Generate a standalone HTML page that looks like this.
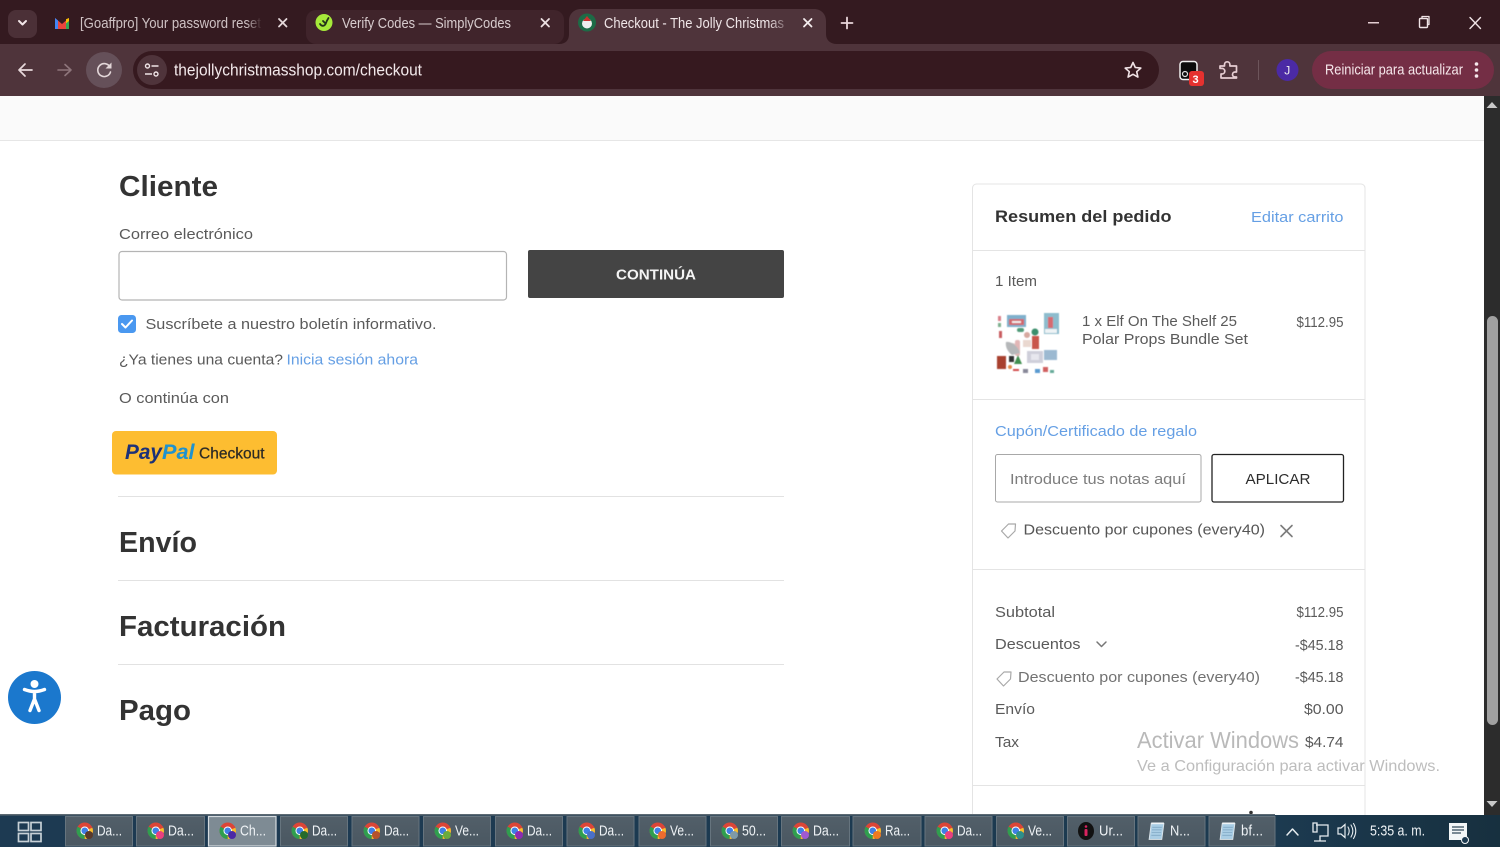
<!DOCTYPE html>
<html lang="es"><head><meta charset="utf-8"><title>Checkout</title>
<style>
html,body{margin:0;padding:0;width:1500px;height:847px;overflow:hidden;background:#fff}
svg{display:block;position:absolute;left:0;top:0}
text{font-family:"Liberation Sans","DejaVu Sans",sans-serif;white-space:pre}
.t{fill:#5a5a5a;font-size:15px}
.b{fill:#4b8fe0;font-size:15px;opacity:.85}
.h{fill:#333;font-size:29px;font-weight:bold}
.c{fill:#f0e6e8;font-size:15px}
.k{fill:#eef2f5;font-size:15px}
.ln{fill:none;stroke-linecap:round;stroke-linejoin:round}
</style></head><body>
<svg width="1500" height="847" viewBox="0 0 1500 847" xmlns="http://www.w3.org/2000/svg">
<defs>
<linearGradient id="tb" x1="0" y1="0" x2="1" y2="0"><stop offset="0" stop-color="#1d3a52"/><stop offset=".85" stop-color="#1c3a50"/><stop offset="1" stop-color="#17303f"/></linearGradient>
<linearGradient id="btn" x1="0" y1="0" x2="0" y2="1"><stop offset="0" stop-color="#525f69"/><stop offset="1" stop-color="#4a5761"/></linearGradient>
<linearGradient id="fade1" x1="0" y1="0" x2="1" y2="0"><stop offset="0" stop-color="#341a20" stop-opacity="0"/><stop offset="1" stop-color="#341a20"/></linearGradient>
<linearGradient id="fade3" x1="0" y1="0" x2="1" y2="0"><stop offset="0" stop-color="#4f343b" stop-opacity="0"/><stop offset="1" stop-color="#4f343b"/></linearGradient>
<filter id="soft"><feGaussianBlur stdDeviation=".55"/></filter>
<symbol id="ch" viewBox="0 0 16 16" overflow="visible">
<circle cx="8" cy="8" r="7.5" fill="#dc4537"/>
<path d="M8 8L1.5 4.2A7.5 7.5 0 0 0 8 15.5Z" fill="#2f9e4f"/>
<path d="M8 8L15 5.3A7.5 7.5 0 0 1 8 15.500Z" fill="#f6c02d"/>
<circle cx="8" cy="8" r="3.9" fill="#fff"/><circle cx="8" cy="8" r="3" fill="#3f7fe6"/>
</symbol>
<symbol id="np" viewBox="0 0 14 17" overflow="visible">
<path d="M2 1h12l-2 15H0z" fill="#a9cde4" stroke="#dfe7ec" stroke-width=".8"/>
<path d="M3 4.500h9M2.700 7h9M2.400 9.500h9M2.100 12h9" stroke="#7aa3bf" stroke-width=".7"/>
<rect x="2" y="0" width="12" height="1.600" fill="#eef3f6"/>
</symbol>
</defs>

<!-- browser frame -->
<rect width="1500" height="44" fill="#341a20"/>
<rect y="44" width="1500" height="52" fill="#4f343b"/>
<rect x="8" y="10" width="29" height="28" rx="8" fill="#4b3037"/>
<path class="ln" d="M19 21l3.500 3.500L26 21" stroke="#f2e6e8" stroke-width="2"/>

<!-- tab 1 -->
<path d="M55 18l7 6 7-6v11h-14z" fill="#e8453c"/>
<path d="M55 18v11h3v-8.500z" fill="#4285f4"/><path d="M69 18v11h-3v-8.500z" fill="#34a853"/><path d="M66 19.200l3-1.200v3l-3 2.400z" fill="#fbbc04"/>
<text x="80" y="28" class="c" textLength="181" lengthAdjust="spacingAndGlyphs" fill-opacity=".82">[Goaffpro] Your password reset</text>
<rect x="246" y="12" width="16" height="24" fill="url(#fade1)"/>
<path class="ln" d="M279 19l7.500 7.500M286.500 19l-7.500 7.500" stroke="#e5d8da" stroke-width="1.800"/>

<!-- tab 2 -->
<rect x="306" y="10" width="258" height="34" rx="10" fill="#40242b"/>
<circle cx="324" cy="22.500" r="8.500" fill="#a6ea3a"/>
<path class="ln" d="M320 24c2 3 5 2 6-1s2-4 2.500-5M323 21l2 2" stroke="#24331a" stroke-width="1.800"/>
<text x="342" y="28" class="c" textLength="169" lengthAdjust="spacingAndGlyphs" fill-opacity=".86">Verify Codes — SimplyCodes</text>
<path class="ln" d="M541.500 19l7.500 7.500M549 19l-7.500 7.500" stroke="#ece0e2" stroke-width="1.800"/>

<!-- active tab -->
<path d="M559 44C566 44 569 40 569 34V21C569 14 574 9 581 9H814C821 9 826 14 826 21V34C826 40 830 44 837 44Z" fill="#4f343b"/>
<circle cx="587" cy="22.500" r="9" fill="#1d6b46"/>
<circle cx="587" cy="23.500" r="5" fill="#eee"/><path d="M583 21l4-5 4 5z" fill="#c9312f"/>
<text x="604" y="28" class="c" textLength="180" lengthAdjust="spacingAndGlyphs" fill="#f4ecee">Checkout - The Jolly Christmas</text>
<rect x="768" y="12" width="24" height="24" fill="url(#fade3)"/>
<path class="ln" d="M804 19l7.500 7.500M811.500 19l-7.500 7.500" stroke="#f4ecee" stroke-width="1.800"/>
<path class="ln" d="M847 17.500v11M841.500 23h11" stroke="#e9d6da" stroke-width="1.800"/>

<!-- window controls -->
<rect x="1368" y="22" width="11" height="1.500" fill="#e4cdd2"/>
<rect x="1419.500" y="18.500" width="8" height="9" rx="1" fill="none" stroke="#f0e4e6" stroke-width="1.400"/>
<path class="ln" d="M1422 18v-1.500h7v8h-1.500" stroke="#f0e4e6" stroke-width="1.300"/>
<path class="ln" d="M1470 17.500l10.500 11M1480.500 17.500l-10.500 11" stroke="#f0e4e6" stroke-width="1.400"/>

<!-- toolbar -->
<path class="ln" d="M32 70H19M25 64l-6 6 6 6" stroke="#e8d8db" stroke-width="1.700"/>
<path class="ln" d="M71 70H58M65 64.500l6 5.500-6 5.500" stroke="#8e757b" stroke-width="1.600"/>
<circle cx="104" cy="70" r="18" fill="#655059"/>
<path class="ln" d="M110 67A6.500 6.500 0 1 0 110.500 72" stroke="#e2d6d8" stroke-width="1.600"/>
<path d="M111.500 62.500v6H105.500z" fill="#e2d6d8"/>
<rect x="133" y="51" width="1026" height="38" rx="19" fill="#36191f"/>
<circle cx="152" cy="70" r="15" fill="#4f343b"/>
<circle cx="147.500" cy="66" r="2" fill="none" stroke="#efe4e6" stroke-width="1.400"/>
<path d="M151.500 66h7M145 74h7" stroke="#efe4e6" stroke-width="1.500"/>
<circle cx="156" cy="74" r="2" fill="none" stroke="#efe4e6" stroke-width="1.400"/>
<text x="174" y="75.500" font-size="16.500" fill="#f3e9eb" textLength="248" lengthAdjust="spacingAndGlyphs">thejollychristmasshop.com/checkout</text>
<path class="ln" d="M1133 62.500l2.300 5 5.500.6-4.100 3.600 1.200 5.400-4.900-2.800-4.900 2.800 1.200-5.400-4.100-3.600 5.500-.6z" stroke="#f0e2e5" stroke-width="1.600"/>
<rect x="1180" y="61.500" width="17" height="18" rx="3" fill="#0c0c0c" stroke="#f0f0f0" stroke-width="1.500"/>
<circle cx="1185" cy="74" r="2.500" fill="none" stroke="#ddd" stroke-width="1.200"/>
<rect x="1189" y="71" width="15" height="15" rx="3" fill="#e5312f"/>
<text x="1192.500" y="83" font-size="11" font-weight="bold" fill="#fff">3</text>
<path class="ln" d="M1220 66h4.500v-1.500a2.700 2.700 0 0 1 5.400 0V66h6.600v6h-1.500a2.500 2.500 0 0 0 0 5h1.500V78H1221v-4h1a2.800 2.800 0 0 0 0-5.600h-2z" stroke="#e6cdd2" stroke-width="1.700"/>
<rect x="1258" y="60" width="1" height="20" fill="#6d555b"/>
<circle cx="1287.500" cy="70" r="11" fill="#4b2aa5"/>
<text x="1284.300" y="74.500" font-size="12" fill="#eee">J</text>
<rect x="1312" y="51" width="182" height="38" rx="19" fill="#742e45"/>
<text x="1325" y="74.500" font-size="14.500" fill="#f6e7eb" textLength="138" lengthAdjust="spacingAndGlyphs">Reiniciar para actualizar</text>
<circle cx="1476.500" cy="64" r="1.800" fill="#f6e7eb"/><circle cx="1476.500" cy="70" r="1.800" fill="#f6e7eb"/><circle cx="1476.500" cy="76" r="1.800" fill="#f6e7eb"/>

<!-- page -->
<rect y="96" width="1484" height="719" fill="#fff"/>
<rect y="96" width="1484" height="44" fill="#fafafa"/>
<rect y="140" width="1484" height="1" fill="#e6e6e6"/>

<text x="119" y="196" class="h" textLength="99" lengthAdjust="spacingAndGlyphs">Cliente</text>
<text x="119" y="239" class="t" textLength="134" lengthAdjust="spacingAndGlyphs">Correo electrónico</text>
<rect x="119" y="251.500" width="387.500" height="48.500" rx="3" fill="#fff" stroke="#b4b4b4" stroke-width="1.200"/>
<rect x="528" y="250" width="256" height="48" rx="2" fill="#444444"/>
<text x="616" y="279.500" font-size="14.500" font-weight="bold" fill="#f4f4f4" textLength="80" lengthAdjust="spacingAndGlyphs">CONTINÚA</text>
<rect x="118" y="315" width="18" height="18" rx="3.500" fill="#4a98f0"/>
<path class="ln" d="M122 324l3.500 3.500 6.500-7" stroke="#fff" stroke-width="2"/>
<text x="145.500" y="329" class="t" textLength="291" lengthAdjust="spacingAndGlyphs">Suscríbete a nuestro boletín informativo.</text>
<text x="119" y="364.500" class="t" textLength="164" lengthAdjust="spacingAndGlyphs">¿Ya tienes una cuenta?</text>
<text x="286.500" y="364.500" class="b" textLength="131.500" lengthAdjust="spacingAndGlyphs">Inicia sesión ahora</text>
<text x="119" y="403" class="t" textLength="110" lengthAdjust="spacingAndGlyphs">O continúa con</text>
<rect x="112" y="431" width="165" height="43.500" rx="4" fill="#fdbd31"/>
<text x="125" y="459" font-size="21.500" font-weight="bold" font-style="italic" fill="#1c3178" textLength="37" lengthAdjust="spacingAndGlyphs">Pay</text>
<text x="162" y="459" font-size="21.500" font-weight="bold" font-style="italic" fill="#1f92cf" textLength="32.500" lengthAdjust="spacingAndGlyphs">Pal</text>
<text x="199" y="458.500" font-size="15.500" fill="#2d2b25" stroke="#2d2b25" stroke-width=".25" textLength="65.500" lengthAdjust="spacingAndGlyphs">Checkout</text>
<rect x="118" y="496" width="666" height="1" fill="#e2e2e2"/>
<text x="119" y="552" class="h" textLength="78" lengthAdjust="spacingAndGlyphs">Envío</text>
<rect x="118" y="580" width="666" height="1" fill="#e2e2e2"/>
<text x="119" y="636" class="h" textLength="167" lengthAdjust="spacingAndGlyphs">Facturación</text>
<rect x="118" y="664" width="666" height="1" fill="#e2e2e2"/>
<text x="119" y="720" class="h" textLength="72" lengthAdjust="spacingAndGlyphs">Pago</text>

<!-- accessibility -->
<circle cx="34.500" cy="697.500" r="26.500" fill="#1b78cd"/>
<circle cx="34.500" cy="684" r="4" fill="#fff"/>
<path class="ln" d="M24.500 689.500c4 1.500 7 2 10 2s6-.5 10-2M34.500 692v7M34.500 699l-4.500 11.500M34.500 699l4.500 11.500" stroke="#fff" stroke-width="3.400"/>

<!-- order card -->
<path d="M972.500 815V188a4 4 0 0 1 4-4H1361a4 4 0 0 1 4 4V815" fill="#fff" stroke="#e4e4e4" stroke-width="1"/>
<text x="995" y="222" font-size="17" font-weight="bold" fill="#333" textLength="176.500" lengthAdjust="spacingAndGlyphs">Resumen del pedido</text>
<text x="1251" y="222" class="b" textLength="92.500" lengthAdjust="spacingAndGlyphs">Editar carrito</text>
<rect x="973" y="250" width="392" height="1" fill="#e4e4e4"/>
<text x="995" y="286" class="t" textLength="42" lengthAdjust="spacingAndGlyphs">1 Item</text>

<!-- product image -->
<g filter="url(#soft)">
<rect x="1007" y="315" width="19" height="12" fill="#7fb0cc"/><rect x="1009" y="319" width="15" height="6" fill="#d2686d"/><rect x="1012" y="321" width="9" height="2" fill="#f2eeee"/>
<rect x="1044" y="313" width="15" height="21" fill="#8dbccd"/><rect x="1048" y="317" width="5" height="11" fill="#d66a6f"/><rect x="1045" y="329" width="12" height="4" fill="#eef3f5"/>
<rect x="998" y="316" width="3" height="5" fill="#d9808a"/><rect x="998" y="323" width="3" height="4" fill="#7db08f"/><rect x="999" y="331" width="3" height="7" fill="#c95c60"/>
<ellipse cx="1012" cy="346" rx="5" ry="3" fill="#d8c9c9"/><rect x="1015" y="340" width="5" height="16" rx="2" fill="#e2b6b6"/>
<path d="M1006 342c5-1 12 4 14 11l-8 2c-4-3-7-8-6-13z" fill="#b5b7b9"/>
<rect x="1017" y="328" width="7" height="4" rx="2" fill="#4f9a78"/>
<circle cx="1027" cy="335" r="3" fill="#d7a9a0"/><rect x="1023" y="340" width="8" height="7" fill="#ead8d0"/>
<circle cx="1035" cy="332" r="3.500" fill="#3a8f6c"/><rect x="1032" y="336" width="7" height="13" fill="#c9564c"/>
<rect x="1027" y="351" width="16" height="12" fill="#cfcfda"/><rect x="1031" y="354" width="8" height="6" fill="#e7e7ee"/><rect x="1044" y="350" width="13" height="10" fill="#9cb9d1"/>
<rect x="997" y="356" width="9" height="13" fill="#a8402e"/><rect x="1009" y="356" width="5" height="6" fill="#333"/><path d="M1018 355l4 9h-8z" fill="#3f8f4f"/><circle cx="1010" cy="367" r="2" fill="#e08a4a"/>
<rect x="1013" y="369" width="6" height="2" fill="#d24b4b"/><rect x="1023" y="369" width="5" height="4" fill="#889"/><rect x="1035" y="369" width="5" height="4" fill="#5a9ad0"/><rect x="1043" y="367" width="5" height="5" fill="#d06060"/><rect x="1050" y="370" width="4" height="3" fill="#6a9"/>
</g>
<text x="1082" y="326" class="t" textLength="155" lengthAdjust="spacingAndGlyphs">1 x Elf On The Shelf 25</text>
<text x="1082" y="344" class="t" textLength="166" lengthAdjust="spacingAndGlyphs">Polar Props Bundle Set</text>
<text x="1296.500" y="327" class="t" textLength="47" lengthAdjust="spacingAndGlyphs">$112.95</text>
<rect x="973" y="399" width="392" height="1" fill="#e4e4e4"/>
<text x="995" y="436" class="b" textLength="202" lengthAdjust="spacingAndGlyphs">Cupón/Certificado de regalo</text>
<rect x="995.500" y="454.500" width="205.500" height="47.500" rx="2" fill="#fff" stroke="#a8a8a8" stroke-width="1"/>
<text x="1010" y="484" font-size="15" fill="#7d7d7d" textLength="176" lengthAdjust="spacingAndGlyphs">Introduce tus notas aquí</text>
<rect x="1212" y="454.500" width="131.500" height="47.500" rx="2" fill="#fff" stroke="#222" stroke-width="1.300"/>
<text x="1245.500" y="484" font-size="15" fill="#2c2c2c" textLength="65" lengthAdjust="spacingAndGlyphs">APLICAR</text>
<path class="ln" d="M1001.500 531l7-7h7l-.5 7-7 7z" stroke="#a9a9a9" stroke-width="1.200"/>
<text x="1023.500" y="534.500" font-size="15" fill="#555" textLength="241.500" lengthAdjust="spacingAndGlyphs">Descuento por cupones (every40)</text>
<path class="ln" d="M1281 525.500l11 11M1292 525.500l-11 11" stroke="#7c7c7c" stroke-width="1.600"/>
<rect x="973" y="569" width="392" height="1" fill="#e4e4e4"/>
<text x="995" y="617" class="t" textLength="60" lengthAdjust="spacingAndGlyphs">Subtotal</text>
<text x="1296.500" y="617" class="t" textLength="47" lengthAdjust="spacingAndGlyphs">$112.95</text>
<text x="995" y="649" class="t" textLength="85.500" lengthAdjust="spacingAndGlyphs">Descuentos</text>
<path class="ln" d="M1097 642l4.500 4.500 4.500-4.500" stroke="#777" stroke-width="1.500"/>
<text x="1295" y="650" class="t" textLength="48.500" lengthAdjust="spacingAndGlyphs">-$45.18</text>
<path class="ln" d="M997 679l7-7h7l-.5 7-7 7z" stroke="#a9a9a9" stroke-width="1.200"/>
<text x="1018" y="682" font-size="15" fill="#727272" textLength="242" lengthAdjust="spacingAndGlyphs">Descuento por cupones (every40)</text>
<text x="1295" y="682" class="t" textLength="48.500" lengthAdjust="spacingAndGlyphs">-$45.18</text>
<text x="995" y="714" class="t" textLength="40" lengthAdjust="spacingAndGlyphs">Envío</text>
<text x="1304" y="714" class="t" textLength="39.500" lengthAdjust="spacingAndGlyphs">$0.00</text>
<text x="995" y="747" class="t" textLength="24" lengthAdjust="spacingAndGlyphs">Tax</text>
<text x="1305" y="747" class="t" textLength="38.500" lengthAdjust="spacingAndGlyphs">$4.74</text>
<rect x="973" y="785" width="392" height="1" fill="#e4e4e4"/>
<circle cx="1251" cy="812.500" r="1.800" fill="#333"/>

<!-- watermark -->
<text x="1137" y="748" font-size="23" fill="#b9b9b9" textLength="162" lengthAdjust="spacingAndGlyphs">Activar Windows</text>
<text x="1137" y="771" font-size="16" fill="#bdbdbd" textLength="303" lengthAdjust="spacingAndGlyphs">Ve a Configuración para activar Windows.</text>

<!-- scrollbar -->
<rect x="1484" y="96" width="16" height="719" fill="#2c2c2c"/>
<rect x="1487" y="316" width="11" height="409" rx="5.500" fill="#a0a0a0"/>
<path d="M1486.500 108l5.500-6 5.500 6z" fill="#c8c8c8"/>
<path d="M1486.500 801l5.500 6 5.500-6z" fill="#c8c8c8"/>

<!-- taskbar -->
<rect y="815" width="1500" height="32" fill="url(#tb)"/>
<rect y="814" width="1275" height="1.500" fill="#5d6a73"/>
<g fill="none" stroke="#c7d0d6" stroke-width="1.700">
<rect x="18.500" y="822.500" width="10" height="8"/><rect x="31" y="822.500" width="10" height="8"/><rect x="18.500" y="833.500" width="10" height="8"/><rect x="31" y="833.500" width="10" height="8"/>
</g>
<g fill="url(#btn)" stroke="#66747e" stroke-width="1">
<rect x="65.500" y="816.500" width="67" height="29.500"/><rect x="136.500" y="816.500" width="68" height="29.500"/>
<rect x="280.500" y="816.500" width="67" height="29.500"/><rect x="352" y="816.500" width="67" height="29.500"/><rect x="423.500" y="816.500" width="67" height="29.500"/><rect x="495.500" y="816.500" width="67" height="29.500"/><rect x="567" y="816.500" width="67" height="29.500"/><rect x="639" y="816.500" width="67" height="29.500"/><rect x="710.500" y="816.500" width="67" height="29.500"/><rect x="781.500" y="816.500" width="68" height="29.500"/><rect x="853" y="816.500" width="68" height="29.500"/><rect x="925" y="816.500" width="67" height="29.500"/><rect x="996.500" y="816.500" width="67" height="29.500"/><rect x="1067.500" y="816.500" width="67" height="29.500"/><rect x="1138" y="816.500" width="67" height="29.500"/><rect x="1209" y="816.500" width="66" height="29.500"/>
</g>
<rect x="208.500" y="816.500" width="67.500" height="29.500" fill="#7e8b94" stroke="#d5dbdf" stroke-width="1.200"/>

<use href="#ch" x="76" y="822" width="17.500" height="17.500"/><circle cx="89" cy="835" r="4" fill="#5a3a2a"/>
<use href="#ch" x="147" y="822" width="17.500" height="17.500"/><circle cx="160" cy="835" r="4" fill="#e9407f"/>
<use href="#ch" x="219" y="822" width="17.500" height="17.500"/><circle cx="232" cy="835" r="4" fill="#4b2aa5"/>
<use href="#ch" x="291" y="822" width="17.500" height="17.500"/><circle cx="304" cy="835" r="4" fill="#256b2c"/>
<use href="#ch" x="363" y="822" width="17.500" height="17.500"/><circle cx="376" cy="835" r="4" fill="#b5522a"/>
<use href="#ch" x="434" y="822" width="17.500" height="17.500"/><circle cx="447" cy="835" r="4" fill="#6bab3d"/>
<use href="#ch" x="506" y="822" width="17.500" height="17.500"/><circle cx="519" cy="835" r="4" fill="#8e2bb0"/>
<use href="#ch" x="578" y="822" width="17.500" height="17.500"/><circle cx="591" cy="835" r="4" fill="#4a70c8"/>
<use href="#ch" x="649" y="822" width="17.500" height="17.500"/><circle cx="662" cy="835" r="4" fill="#ee6c2f"/>
<use href="#ch" x="721" y="822" width="17.500" height="17.500"/><circle cx="734" cy="835" r="4" fill="#7f9aa8"/>
<use href="#ch" x="792" y="822" width="17.500" height="17.500"/><circle cx="805" cy="835" r="4" fill="#a05ad0"/>
<use href="#ch" x="864" y="822" width="17.500" height="17.500"/><circle cx="877" cy="835" r="4" fill="#ee7a22"/>
<use href="#ch" x="936" y="822" width="17.500" height="17.500"/><circle cx="949" cy="835" r="4" fill="#e9407f"/>
<use href="#ch" x="1007" y="822" width="17.500" height="17.500"/><circle cx="1020" cy="835" r="4" fill="#2e8f8a"/>
<ellipse cx="1086" cy="831" rx="8" ry="9" fill="#111"/><rect x="1084.500" y="829" width="3" height="7" rx="1" fill="#d8235f"/><circle cx="1086" cy="826.500" r="1.300" fill="#d8235f"/>
<use href="#np" x="1149" y="822.500" width="15" height="18"/>
<use href="#np" x="1220" y="822.500" width="15" height="18"/>

<text x="97" y="835.500" class="k" textLength="25" lengthAdjust="spacingAndGlyphs">Da...</text>
<text x="168" y="835.500" class="k" textLength="26" lengthAdjust="spacingAndGlyphs">Da...</text>
<text x="240" y="835.500" class="k" textLength="26" lengthAdjust="spacingAndGlyphs">Ch...</text>
<text x="312" y="835.500" class="k" textLength="25" lengthAdjust="spacingAndGlyphs">Da...</text>
<text x="384" y="835.500" class="k" textLength="25" lengthAdjust="spacingAndGlyphs">Da...</text>
<text x="455" y="835.500" class="k" textLength="24" lengthAdjust="spacingAndGlyphs">Ve...</text>
<text x="527" y="835.500" class="k" textLength="25" lengthAdjust="spacingAndGlyphs">Da...</text>
<text x="599" y="835.500" class="k" textLength="25" lengthAdjust="spacingAndGlyphs">Da...</text>
<text x="670" y="835.500" class="k" textLength="24" lengthAdjust="spacingAndGlyphs">Ve...</text>
<text x="742" y="835.500" class="k" textLength="24" lengthAdjust="spacingAndGlyphs">50...</text>
<text x="813" y="835.500" class="k" textLength="26" lengthAdjust="spacingAndGlyphs">Da...</text>
<text x="885" y="835.500" class="k" textLength="25" lengthAdjust="spacingAndGlyphs">Ra...</text>
<text x="957" y="835.500" class="k" textLength="25" lengthAdjust="spacingAndGlyphs">Da...</text>
<text x="1028" y="835.500" class="k" textLength="24" lengthAdjust="spacingAndGlyphs">Ve...</text>
<text x="1099" y="835.500" class="k" textLength="24" lengthAdjust="spacingAndGlyphs">Ur...</text>
<text x="1170" y="835.500" class="k" textLength="20" lengthAdjust="spacingAndGlyphs">N...</text>
<text x="1241" y="835.500" class="k" textLength="22" lengthAdjust="spacingAndGlyphs">bf...</text>

<!-- tray -->
<path class="ln" d="M1287 835l5.500-6 5.500 6" stroke="#e6ecef" stroke-width="1.500"/>
<path d="M1316 825h12v11h-8v5M1314 841h12M1313 823h4v9h-4z" fill="none" stroke="#e6ecef" stroke-width="1.300"/>
<path d="M1338 828h3l4-3.500v13l-4-3.500h-3z" fill="none" stroke="#e6ecef" stroke-width="1.200"/>
<path class="ln" d="M1348 827c1.500 2.500 1.500 5.500 0 8M1351 825c2.500 4 2.500 8 0 12M1353.500 823.500c3 5 3 10 0 15" stroke="#e6ecef" stroke-width="1.100"/>
<text x="1370" y="835.500" class="k" textLength="55" lengthAdjust="spacingAndGlyphs">5:35 a. m.</text>
<path d="M1449 823h18v17h-18z" fill="#f3f6f7"/>
<path d="M1452 827h12M1452 830h12M1452 833h9" stroke="#33495a" stroke-width="1.200"/>
<circle cx="1465" cy="840" r="3.500" fill="#1c3a50" stroke="#f3f6f7" stroke-width="1"/>
</svg>
</body></html>
